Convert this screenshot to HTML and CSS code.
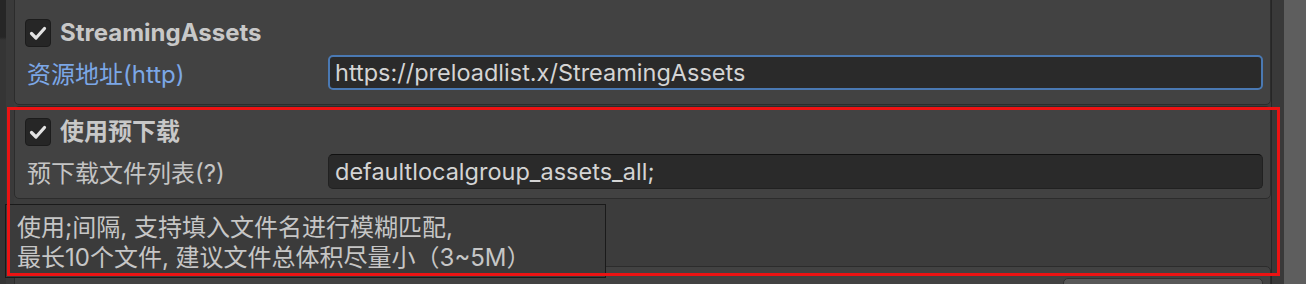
FILE: index.html
```html
<!DOCTYPE html>
<html lang="zh">
<head>
    <meta charset="UTF-8">
    <title>Preload Settings</title>
    <link rel="stylesheet" href="styles.css">
</head>
<body>
    <div class="window">
        <div class="gutter"><div class="gutter-strip"></div></div>
        <div class="inspector">
            <section class="group group-first">
                <div class="toggle-row">
                    <span class="checkbox">
                        <svg viewBox="0 0 26 28" width="26" height="28"><polyline points="6.5,14.5 11,19 19.5,9.5"/></svg>
                    </span>
                    <span class="toggle-label">StreamingAssets</span>
                </div>
                <div class="field-row">
                    <span class="field-label link">资源地址(http)</span>
                    <div class="text-field focused">https://preloadlist.x/StreamingAssets</div>
                </div>
            </section>
            <section class="group">
                <div class="toggle-row">
                    <span class="checkbox">
                        <svg viewBox="0 0 26 28" width="26" height="28"><polyline points="6.5,14.5 11,19 19.5,9.5"/></svg>
                    </span>
                    <span class="toggle-label">使用预下载</span>
                </div>
                <div class="field-row">
                    <span class="field-label">预下载文件列表(?)</span>
                    <div class="text-field">defaultlocalgroup_assets_all;</div>
                </div>
            </section>
            <div class="spacer"></div>
            <section class="group group-last">
                <div class="bottom-row">
                    <span class="field-label">构建后自动复制文件到目标目录下</span>
                    <span class="button"></span>
                </div>
            </section>
        </div>
        <div class="side"></div>
        <div class="scrollbar"></div>
    </div>

    <div class="tooltip">
        使用;间隔, 支持填入文件名进行模糊匹配,<br>
        最长10个文件, 建议文件总体积尽量小（3~5M）
    </div>
    <div class="highlight"></div>
</body>
</html>
```

FILE: styles.css
```css
body {
    margin: 0;
    width: 1306px;
    height: 284px;
    overflow: hidden;
    background-color: #3a3a3a;
    font-family: "Inter", "Noto Sans CJK SC", sans-serif;
    font-size: 24px;
    color: #c4c4c4;
    position: relative;
}
.window {
    display: flex;
    height: 284px;
}
.gutter {
    width: 14px;
    background-color: #3a3a3a;
}
.gutter-strip {
    width: 6px;
    height: 100%;
    background: linear-gradient(#262626 0, #262626 37px, #353535 40px, #353535 100%);
}
.inspector {
    width: 1257px;
    background-color: #3c3c3c;
    border-right: 1px solid #262626;
    display: flex;
    flex-direction: column;
}
.side {
    width: 12px;
    background-color: #393939;
}
.scrollbar {
    width: 22px;
    background-color: #5e5e5e;
}
.group {
    background-color: #424242;
    border: 1px solid #2c2c2c;
    border-radius: 5px;
    padding: 11px 7px 9px 10px;
    display: flex;
    flex-direction: column;
    gap: 8px;
}
.group-first {
    margin-top: -6px;
    padding-top: 24px;
    padding-bottom: 14px;
    margin-bottom: 1px;
    border-radius: 0 0 5px 5px;
}
.group-last {
    padding-top: 11px;
}
.spacer {
    height: 67px;
    flex-shrink: 0;
}
.toggle-row {
    display: flex;
    align-items: center;
    gap: 9px;
    height: 28px;
}
.checkbox {
    width: 26px;
    height: 28px;
    box-sizing: border-box;
    background-color: #262626;
    border: 1px solid #1c1c1c;
    border-radius: 4px;
    display: flex;
}
.checkbox svg {
    margin: -1px;
}
.checkbox polyline {
    fill: none;
    stroke: #e4e4e4;
    stroke-width: 3.2;
    stroke-linecap: round;
    stroke-linejoin: round;
}
.toggle-label {
    font-weight: 700;
    color: #c8c8c8;
    line-height: 28px;
}
.field-row {
    display: grid;
    grid-template-columns: 303px 1fr;
    align-items: center;
    height: 35px;
}
.field-label {
    padding-left: 2px;
    white-space: nowrap;
}
.link {
    color: #7ca7e6;
}
.text-field {
    height: 35px;
    box-sizing: border-box;
    background-color: #2a2a2a;
    border: 1px solid #212121;
    border-top-color: #101010;
    border-radius: 5px;
    padding: 0 6px;
    line-height: 33px;
    font-size: 23.5px;
    color: #d4d4d4;
    white-space: nowrap;
}
.text-field.focused {
    border: 2px solid #4a79b3;
    padding: 0 5px;
    line-height: 31px;
}
.bottom-row {
    display: flex;
    justify-content: space-between;
    align-items: flex-start;
    height: 40px;
}
.bottom-row .field-label {
    margin-top: 1px;
}
.button {
    width: 198px;
    height: 36px;
    background-color: #585858;
    border: 1px solid #303030;
    border-radius: 5px;
}
.tooltip {
    position: absolute;
    left: 5px;
    top: 204px;
    width: 601px;
    height: 74px;
    box-sizing: border-box;
    background-color: #3b3b3b;
    border: 1px solid #1a1a1a;
    padding: 8px 11px 0;
    line-height: 30px;
    color: #c6c6c6;
    white-space: nowrap;
}
.highlight {
    position: absolute;
    left: 7px;
    top: 107px;
    width: 1273px;
    height: 169px;
    box-sizing: border-box;
    border: 3px solid #ec1313;
}
```
